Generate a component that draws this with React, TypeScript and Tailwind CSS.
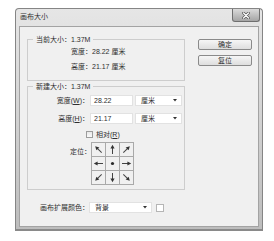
const font = { fontFamily: '"Liberation Sans", "Noto Sans CJK SC", sans-serif' }

// rotation of an up-pointing arrow for each anchor cell; null = centre dot
const anchors: (number | null)[] = [-45, 0, 45, -90, null, 90, -135, 180, 135]

function AnchorCell({ rot }: { rot: number | null }) {
  return (
    <div className="w-[13px] h-[13px] bg-[#f0f0f0] flex items-center justify-center">
      <svg width="13" height="13" viewBox="0 0 13 13">
        {rot === null ? (
          <circle cx="6.5" cy="6.5" r="1.6" fill="#2a2a2a" />
        ) : (
          <g transform={`rotate(${rot} 6.5 6.5)`}>
            <line x1="6.5" y1="11" x2="6.5" y2="4.5" stroke="#444" strokeWidth="1" />
            <polygon points="6.5,1.8 4.4,5.6 8.6,5.6" fill="#333" />
          </g>
        )}
      </svg>
    </div>
  )
}

function Select({ label, w }: { label: string; w: string }) {
  return (
    <div className={`${w} h-[11px] bg-white border border-[#e2e2e2] flex items-center justify-between pl-[5px] pr-[4px]`}>
      <span className="leading-[9px]">{label}</span>
      <svg width="4" height="3" viewBox="0 0 4 3">
        <polygon points="0,0 4,0 2,2.5" fill="#333" />
      </svg>
    </div>
  )
}

export default function App() {
  return (
    <div className="w-[274px] h-[241px] bg-white overflow-hidden pt-[8px] pl-[15px] text-[7px] text-[#2e2e2e]" style={font}>
      {/* Window frame */}
      <div className="w-[248px] h-[223px] rounded-t-[4px] border border-[#858585] border-b-2 border-b-[#8a8a8a] bg-gradient-to-b from-[#e6e6e6] via-[#d2d2d2] to-[#bdbdbd] px-[3px] pb-[2px] flex flex-col">
        {/* Title bar */}
        <div className="h-[17px] flex items-start justify-between">
          <span className="pt-[3px] pl-[1px] leading-[9px] text-[#333]">画布大小</span>
          <div className="-mr-[1px] w-[28px] h-[13px] rounded-b-[3px] border border-t-0 border-[#6f6f6f] bg-gradient-to-b from-[#dadada] to-[#a5a5a5] flex items-center justify-center">
            <svg width="8" height="7" viewBox="0 0 8 7">
              <path d="M1.5 1 L6.5 6 M6.5 1 L1.5 6" stroke="#555" strokeWidth="2.6" strokeLinecap="round" />
              <path d="M1.5 1 L6.5 6 M6.5 1 L1.5 6" stroke="#fff" strokeWidth="1.3" strokeLinecap="round" />
            </svg>
          </div>
        </div>

        {/* Client area */}
        <div className="flex-1 border border-[#a3a3a3] bg-[#f0f0f0] flex pl-[7px] pt-[8px]">
          <div className="w-[158px] flex flex-col">
            {/* Current size */}
            <fieldset className="border border-[#cdcdcd] pt-[3px] pb-[9px]">
              <legend className="ml-[5px] px-[3px] leading-[9px]">当前大小：1.37M</legend>
              <div className="pl-[43px] flex flex-col gap-[6px]">
                <div className="leading-[9px]">宽度：28.22 厘米</div>
                <div className="leading-[9px]">高度：21.17 厘米</div>
              </div>
            </fieldset>

            {/* New size */}
            <fieldset className="mt-[1px] border border-[#cdcdcd] pt-[4px] pb-[4px]">
              <legend className="ml-[5px] px-[3px] leading-[9px]">新建大小：1.37M</legend>
              <div className="flex items-center h-[11px]">
                <span className="w-[61px] text-right leading-[9px]">宽度(<span className="underline">W</span>)：</span>
                <div className="ml-[1px] w-[43px] h-[11px] bg-white border border-[#e2e2e2] pl-[3px] leading-[9px]">28.22</div>
                <div className="ml-[2px]"><Select label="厘米" w="w-[47px]" /></div>
              </div>
              <div className="mt-[7px] flex items-center h-[11px]">
                <span className="w-[61px] text-right leading-[9px]">高度(<span className="underline">H</span>)：</span>
                <div className="ml-[1px] w-[43px] h-[11px] bg-white border border-[#e2e2e2] pl-[3px] leading-[9px]">21.17</div>
                <div className="ml-[2px]"><Select label="厘米" w="w-[47px]" /></div>
              </div>
              <div className="mt-[6px] flex items-center h-[9px] pl-[58px]">
                <span className="w-[7px] h-[7px] border border-[#9c9c9c] bg-gradient-to-b from-[#e8e8e8] to-[#fafafa]" />
                <span className="ml-[3px] leading-[9px]">相对(<span className="underline">R</span>)</span>
              </div>
              <div className="mt-[3px] flex items-start">
                <span className="w-[63px] text-right leading-[9px] pt-[5px]">定位：</span>
                <div className="grid grid-cols-[repeat(3,13px)] gap-px p-px bg-[#a9a9a9]">
                  {anchors.map((r, i) => (
                    <AnchorCell key={i} rot={r} />
                  ))}
                </div>
              </div>
            </fieldset>

            {/* Canvas extension colour */}
            <div className="mt-[12px] pl-[13px] flex items-center">
              <span className="w-[49px] leading-[9px]">画布扩展颜色：</span>
              <Select label="背景" w="w-[63px]" />
              <span className="ml-[4px] w-[8px] h-[8px] bg-white border border-[#b5b5b5]" />
            </div>
          </div>

          {/* Buttons */}
          <div className="ml-[13px] pt-[4px] flex flex-col gap-[5px]">
            <div className="w-[54px] h-[11px] rounded-[2px] border border-[#8a8a8a] bg-gradient-to-b from-[#f6f6f6] to-[#dedede] flex items-center justify-center leading-[9px]">确定</div>
            <div className="w-[54px] h-[11px] rounded-[2px] border border-[#8a8a8a] bg-gradient-to-b from-[#f6f6f6] to-[#dedede] flex items-center justify-center leading-[9px]">复位</div>
          </div>
        </div>
      </div>
    </div>
  )
}
